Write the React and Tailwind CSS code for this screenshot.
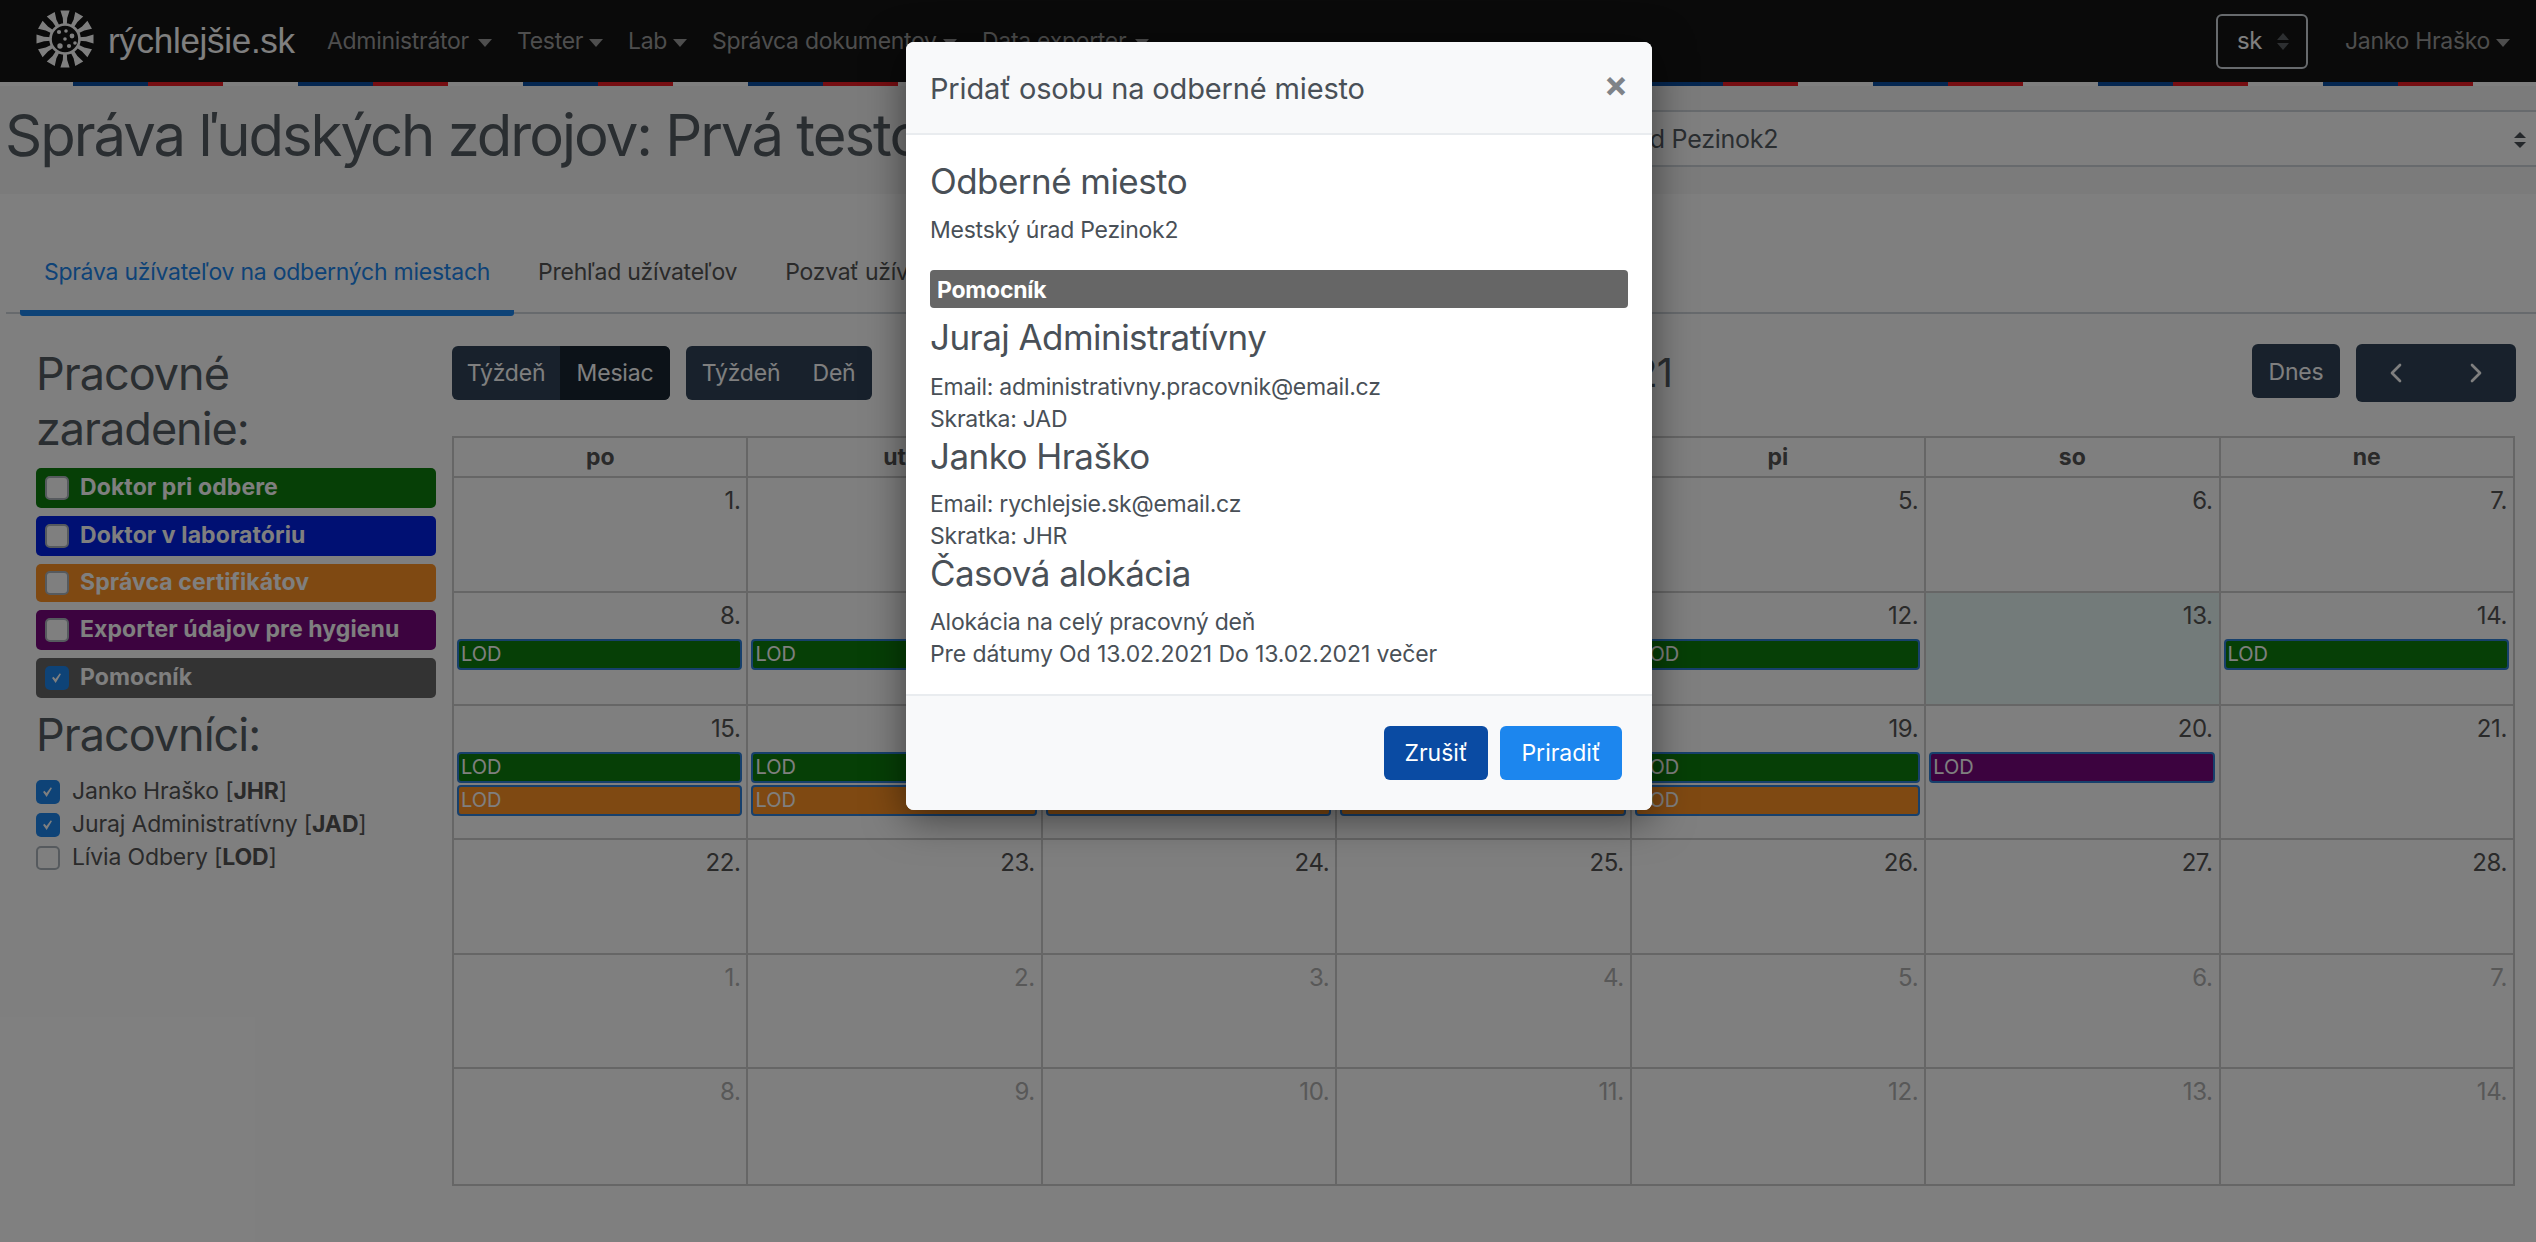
import { ChevronLeft, ChevronRight } from "lucide-react";

const NAV_ITEMS = [
  { label: "Administrátor", width: "w-[165px]" },
  { label: "Tester", width: "w-[86px]" },
  { label: "Lab", width: "w-[59px]" },
  { label: "Správca dokumentov", width: "w-[245px]" },
  { label: "Data exporter", width: "w-[167px]" },
];

const CHIPS = [
  { label: "Doktor pri odbere", bg: "bg-[#0c7e0c]", box: "h-[40px]" },
  { label: "Doktor v laboratóriu", bg: "bg-[#0020e6]", box: "h-[40px]" },
  { label: "Správca certifikátov", bg: "bg-[#ff9224]", box: "h-[38px]" },
  { label: "Exporter údajov pre hygienu", bg: "bg-[#78067e]", box: "h-[40px]" },
  { label: "Pomocník", bg: "bg-[#666666]", box: "h-[40px]", checked: true },
];

const PEOPLE = [
  { name: "Janko Hraško", code: "JHR", checked: true },
  { name: "Juraj Administratívny", code: "JAD", checked: true },
  { name: "Lívia Odbery", code: "LOD", checked: false },
];

const DAYS = ["po", "ut", "st", "št", "pi", "so", "ne"];

const GREEN = "bg-[#0c7e0c]";
const ORANGE = "bg-[#ff9224]";
const PURPLE = "bg-[#78067e]";

// kalendar: kazdy riadok je tyzden, events podla indexu dna
const WEEKS = [
  { days: [1, 2, 3, 4, 5, 6, 7], events: {} },
  {
    days: [8, 9, 10, 11, 12, 13, 14],
    today: 5,
    events: { 0: [GREEN], 1: [GREEN], 2: [GREEN], 3: [GREEN], 4: [GREEN], 6: [GREEN] },
  },
  {
    days: [15, 16, 17, 18, 19, 20, 21],
    events: {
      0: [GREEN, ORANGE],
      1: [GREEN, ORANGE],
      2: [GREEN, ORANGE],
      3: [GREEN, ORANGE],
      4: [GREEN, ORANGE],
      5: [PURPLE],
    },
  },
  { days: [22, 23, 24, 25, 26, 27, 28], events: {} },
  { days: [1, 2, 3, 4, 5, 6, 7], muted: true, events: {} },
  { days: [8, 9, 10, 11, 12, 13, 14], muted: true, events: {} },
];

const LOGO_DOTS = [
  [31, 22, 1.8],
  [24, 23, 2.1],
  [37, 27, 2.4],
  [30, 30, 1.8],
  [25, 37, 2.7],
  [34, 37, 2.1],
  [40, 34, 1.8],
];

function Caret() {
  return (
    <span className="mt-[3px] inline-block h-0 w-0 shrink-0 border-x-[7px] border-t-[8px] border-x-transparent border-t-[#9c9c9c]" />
  );
}

function Logo() {
  const spikes = Array.from({ length: 12 }, (_, i) => i * 30);
  return (
    <svg width="60" height="60" viewBox="0 0 60 60" className="shrink-0">
      {spikes.map((a) => (
        <path
          key={a}
          transform={`rotate(${a} 30 30)`}
          fill="#fff"
          d="M28.2 16 L31.8 16 L32.2 9 L34.6 1.5 L25.4 1.5 L27.8 9 Z"
        />
      ))}
      <circle cx="30" cy="30" r="14.5" fill="none" stroke="#fff" strokeWidth="2.6" />
      {LOGO_DOTS.map(([x, y, r]) => (
        <circle key={`${x}-${y}`} cx={x} cy={y} r={r} fill="#fff" />
      ))}
    </svg>
  );
}

function Checkbox({ checked }) {
  if (checked) {
    return (
      <span className="flex h-[24px] w-[24px] shrink-0 items-center justify-center rounded-[5px] bg-[#1c86ee]">
        <svg width="12" height="12" viewBox="0 0 8 8">
          <path d="M6.6.7 5.9 0 3 3.8 1.6 2.3.7 3.2 3.1 6.5z" fill="#fff" transform="translate(0 .8)" />
        </svg>
      </span>
    );
  }
  return <span className="h-[24px] w-[24px] shrink-0 rounded-[5px] border-2 border-[#adb5bd] bg-white" />;
}

function CalendarCell({ day, muted, today, events }) {
  return (
    <div className={`border-r-2 border-b-2 border-[#cccccc] ${today ? "bg-[#e6f6f4]" : ""}`}>
      <div
        className={`h-[46px] pt-[7px] pr-[6px] text-right text-[24px] leading-[32px] tracking-[-0.4px] ${
          muted ? "text-[#b0b0b0]" : "text-[#555555]"
        }`}
      >
        {day}.
      </div>
      <div className="flex flex-col gap-[2px] pr-[4px] pl-[3px]">
        {events.map((color, i) => (
          <div
            key={i}
            className={`h-[31px] rounded-[4px] border-2 border-[#2f80d8] pl-[2px] text-[20px] leading-[27px] text-white ${color}`}
          >
            LOD
          </div>
        ))}
      </div>
    </div>
  );
}

function Calendar() {
  return (
    <div className="grid w-[2063px] grid-cols-7 grid-rows-[40px_115px_113px_134px_115px_114px_117px] border-t-2 border-l-2 border-[#cccccc]">
      {DAYS.map((d) => (
        <div
          key={d}
          className="flex items-center justify-center border-r-2 border-b-2 border-[#cccccc] text-[23px] font-bold text-[#555555]"
        >
          {d}
        </div>
      ))}
      {WEEKS.map((week, w) =>
        week.days.map((day, i) => (
          <CalendarCell
            key={`${w}-${i}`}
            day={day}
            muted={week.muted}
            today={week.today === i}
            events={week.events[i] || []}
          />
        ))
      )}
    </div>
  );
}

function Navbar() {
  return (
    <div className="flex h-[82px] items-center bg-[#141414] text-[23px] tracking-[-0.3px] text-[#9c9c9c]">
      <div className="-mt-[4px] ml-[35px]">
        <Logo />
      </div>
      <span className="ml-[13px] w-[186px] font-['Liberation_Sans',sans-serif] text-[35px] tracking-[-0.3px] whitespace-nowrap text-white">
        rýchlejšie.sk
      </span>
      <div className="ml-[33px] flex items-center gap-[25px]">
        {NAV_ITEMS.map((item) => (
          <span key={item.label} className={`flex items-center justify-between whitespace-nowrap ${item.width}`}>
            {item.label}
            <Caret />
          </span>
        ))}
      </div>
      <div className="ml-auto flex h-[55px] w-[92px] items-center rounded-[6px] border-2 border-[#ced4da] pl-[19px] text-[24px] text-white">
        sk
        <span className="ml-[15px] flex flex-col gap-[3px]">
          <span className="h-0 w-0 border-x-[6px] border-b-[7px] border-x-transparent border-b-[#5a5f62]" />
          <span className="h-0 w-0 border-x-[6px] border-t-[7px] border-x-transparent border-t-[#5a5f62]" />
        </span>
      </div>
      <span className="mr-[26px] ml-[37px] flex w-[165px] items-center justify-between whitespace-nowrap">
        Janko Hraško
        <Caret />
      </span>
    </div>
  );
}

function ToolbarButtons() {
  return (
    <div className="flex h-[92px] w-[2064px] items-start justify-between text-[23px] tracking-[-0.2px] text-white">
      <div className="mt-[2px] flex gap-[16px]">
        <div className="flex h-[54px] overflow-hidden rounded-[6px] bg-[#304358]">
          <span className="flex w-[108px] items-center justify-center">Týždeň</span>
          <span className="flex w-[110px] items-center justify-center bg-[#182430]">Mesiac</span>
        </div>
        <div className="flex h-[54px] overflow-hidden rounded-[6px] bg-[#304358]">
          <span className="flex w-[110px] items-center justify-center">Týždeň</span>
          <span className="flex w-[76px] items-center justify-center">Deň</span>
        </div>
      </div>
      <div className="mt-[5px] flex w-[220px] justify-end text-[40px] leading-[48px] tracking-[-1px] whitespace-nowrap text-[#555c63]">
        február 2021
      </div>
      <div className="flex gap-[16px]">
        <span className="flex h-[54px] w-[88px] items-center justify-center rounded-[6px] bg-[#304358] pt-[2px]">
          Dnes
        </span>
        <div className="flex h-[58px] w-[160px] items-center justify-around rounded-[6px] bg-[#304358]">
          <ChevronLeft size={32} strokeWidth={2} />
          <ChevronRight size={32} strokeWidth={2} />
        </div>
      </div>
    </div>
  );
}

function ModalHeading({ children, className = "" }) {
  return <h3 className={`text-[35px] leading-[44px] tracking-[-0.55px] ${className}`}>{children}</h3>;
}

function Modal() {
  return (
    <div className="absolute top-[42px] left-[906px] w-[746px] overflow-hidden rounded-[8px] bg-white text-[23px] leading-[32px] tracking-[-0.25px] text-[#495057] shadow-[0_8px_40px_rgba(0,0,0,0.5)]">
      <div className="relative flex h-[93px] items-center border-b-2 border-[#e9ecef] bg-[#f8f9fa] px-[24px] pt-[2px] text-[29px] tracking-[-0.15px]">
        Pridať osobu na odberné miesto
        <span className="absolute top-[18px] right-[24px] text-[36px] leading-[48px] font-bold text-[#7f8388]">×</span>
      </div>
      <div className="px-[24px] pt-[24px] pb-[24px]">
        <ModalHeading>Odberné miesto</ModalHeading>
        <p className="mt-[11px]">Mestský úrad Pezinok2</p>
        <div className="mt-[24px] flex h-[38px] items-center rounded-[4px] bg-[#666666] pt-[1px] pl-[7px] font-bold text-white">
          Pomocník
        </div>
        <ModalHeading className="mt-[7px]">Juraj Administratívny</ModalHeading>
        <p className="mt-[12px]">Email: administrativny.pracovnik@email.cz</p>
        <p>Skratka: JAD</p>
        <ModalHeading className="-mt-[1px]">Janko Hraško</ModalHeading>
        <p className="mt-[10px]">Email: rychlejsie.sk@email.cz</p>
        <p>Skratka: JHR</p>
        <ModalHeading className="-mt-[1px]">Časová alokácia</ModalHeading>
        <p className="mt-[11px]">Alokácia na celý pracovný deň</p>
        <p className="tracking-[-0.1px]">Pre dátumy Od 13.02.2021 Do 13.02.2021 večer</p>
      </div>
      <div className="flex h-[116px] justify-end gap-[12px] border-t-2 border-[#e9ecef] bg-[#f8f9fa] pt-[30px] pr-[30px] tracking-[0px] text-white">
        <span className="flex h-[54px] w-[104px] items-center justify-center rounded-[6px] bg-[#0a4ba3]">Zrušiť</span>
        <span className="flex h-[54px] w-[122px] items-center justify-center rounded-[6px] bg-[#1c86ee]">Priradiť</span>
      </div>
    </div>
  );
}

export default function App() {
  return (
    <div className="relative h-[1242px] w-[2536px] overflow-hidden bg-white font-[Inter,sans-serif] text-[#555555]">
      <Navbar />
      <div className="h-[4px] bg-[repeating-linear-gradient(90deg,#ffffff_0,#ffffff_73px,#0b4ea2_73px,#0b4ea2_148px,#ee1c25_148px,#ee1c25_223px,#ffffff_223px,#ffffff_225px)]" />

      <div className="flex h-[108px] items-start bg-[#f7f7f7]">
        <h1 className="mt-[12px] ml-[5px] text-[58px] leading-[74px] tracking-[-2px] whitespace-nowrap text-[#555c63]">
          Správa ľudských zdrojov: Prvá testovacia
        </h1>
        <div className="mt-[24px] ml-auto flex h-[57px] w-[1040px] items-center border-y-2 border-[#ced4da] bg-white pt-[2px] pl-[12px] text-[25px] tracking-[-0.25px] text-[#555c63]">
          Mestský úrad Pezinok2
          <span className="mr-[10px] ml-auto flex flex-col gap-[4px]">
            <span className="h-0 w-0 border-x-[6px] border-b-[6px] border-x-transparent border-b-[#4a5056]" />
            <span className="h-0 w-0 border-x-[6px] border-t-[6px] border-x-transparent border-t-[#4a5056]" />
          </span>
        </div>
      </div>

      <div className="mt-[40px] ml-[6px] flex h-[80px] border-b-2 border-[#ced4da] pl-[14px] text-[23px] tracking-[-0.25px]">
        <div className="flex h-[82px] w-[494px] items-center justify-center rounded-b-[3px] border-b-[6px] border-[#1c86ee] text-[#1c86ee]">
          Správa užívateľov na odberných miestach
        </div>
        <div className="ml-[24px] flex h-[76px] items-center text-[#555555]">Prehľad užívateľov</div>
        <div className="ml-[48px] flex h-[76px] items-center text-[#555555]">Pozvať užívateľa</div>
      </div>

      <div className="flex pt-[30px] pl-[36px]">
        <div className="w-[400px] pt-[2px]">
          <h2 className="text-[45px] leading-[55px] tracking-[-1px] text-[#555c63]">Pracovné zaradenie:</h2>
          <div className="mt-[12px] flex flex-col gap-[8px]">
            {CHIPS.map((chip) => (
              <div
                key={chip.label}
                className={`flex items-center gap-[11px] rounded-[5px] pl-[9px] text-[23px] font-bold tracking-[0.1px] text-white ${chip.bg} ${chip.box}`}
              >
                <Checkbox checked={chip.checked} />
                <span className="-mt-[1px]">{chip.label}</span>
              </div>
            ))}
          </div>
          <h2 className="mt-[9px] text-[45px] leading-[56px] tracking-[-1px] text-[#555c63]">Pracovníci:</h2>
          <div className="mt-[12px] flex flex-col">
            {PEOPLE.map((p) => (
              <div key={p.code} className="flex h-[33px] items-center gap-[12px] text-[23px] tracking-[-0.15px]">
                <Checkbox checked={p.checked} />
                <span>
                  {p.name} [<b>{p.code}</b>]
                </span>
              </div>
            ))}
          </div>
        </div>
        <div className="ml-[16px]">
          <ToolbarButtons />
          <Calendar />
        </div>
      </div>

      {/* modal backdrop */}
      <div className="absolute inset-0 bg-black/50" />
      <Modal />
    </div>
  );
}
